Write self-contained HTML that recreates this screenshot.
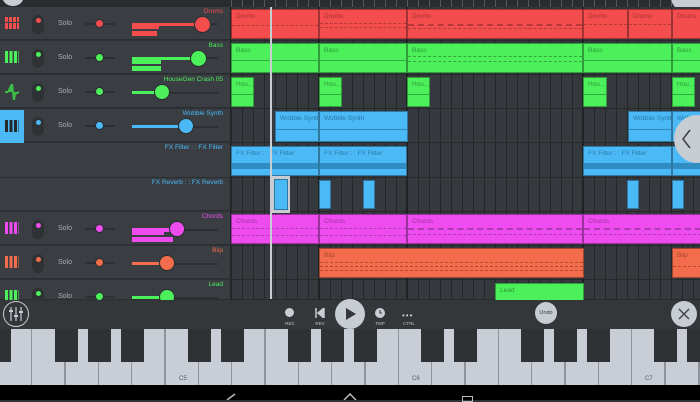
<!DOCTYPE html>
<html><head><meta charset="utf-8"><style>
*{margin:0;padding:0;box-sizing:border-box}
body{width:700px;height:400px;overflow:hidden;background:#2e3236;font-family:"Liberation Sans",sans-serif;position:relative}
.a{position:absolute}
.row{position:absolute;left:0;width:230px;height:33px;background:#3a3e43;border-bottom:1px solid #2a2d31}
.tl{position:absolute;left:231px;width:469px;height:34px;background:repeating-linear-gradient(90deg,#24272a 0 1px,#35393d 1px 11px);border-bottom:1px solid #26292c}
.pill{position:absolute;left:32px;width:12px;height:19px;border-radius:6px;background:#2e3235}
.dot{position:absolute;left:3.5px;top:3px;width:5px;height:5px;border-radius:50%}
.solo{position:absolute;left:58px;font-size:7px;color:#a9adb3}
.st{position:absolute;left:85px;width:30px;height:2px;background:#2c2f33}
.sk{position:absolute;width:9px;height:9px;border-radius:50%;border:1px solid #2a2d30}
.vt{position:absolute;left:132px;width:86px;height:2px;background:#2c2f33}
.vk{position:absolute;width:16px;height:16px;border-radius:50%;border:1px solid #2a2d30}
.nm{position:absolute;left:103px;width:120px;font-size:6.5px;text-align:right;white-space:nowrap}
.c{position:absolute;font-size:6.5px;padding:3px 0 0 4px;border:1px solid rgba(0,0,0,.35);overflow:hidden;white-space:nowrap}
.r{background:#f44d4e;color:#a53033}.g{background:#4cf05b;color:#2d9a38}.b{background:#4bb9f6;color:#2a7aa8}.m{background:#ef4cf0;color:#a02ea3}.o{background:#f36c4b;color:#a74630}
.c i{position:absolute;left:0;right:0;height:1px}
.wk{position:absolute;top:329px;width:33px;height:56px;background:#c8cdd6;border-right:1px solid #8e939b}
.bk{position:absolute;top:329px;width:23px;height:33px;background:#2e3235}
.kl{position:absolute;top:376px;font-size:6px;color:#555a60}
.lab{position:absolute;font-size:4.5px;color:#c0c4ca;text-align:center;width:20px}
</style></head><body>
<div class="a" style="left:0;top:0;width:700px;height:7px;background:#2a2d30"></div>
<div class="a" style="left:231px;top:0;width:469px;height:7px;background:repeating-linear-gradient(90deg,#55595e 0 1px,#2a2d30 1px 11px)"></div>
<div class="a" style="left:2px;top:-14px;width:22px;height:20px;border-radius:50%;background:#c8ccd3"></div>
<div class="a" style="left:671px;top:-20px;width:40px;height:34px;border-radius:50%;background:#c8ccd3"></div>

<div class="row" style="top:7px"></div><div class="row" style="top:41px"></div><div class="row" style="top:75px"></div><div class="row" style="top:109px"></div><div class="row" style="top:143px;height:35px"></div><div class="row" style="top:178px"></div><div class="row" style="top:212px"></div><div class="row" style="top:246px"></div><div class="row" style="top:280px;height:20px"></div>
<div class="a" style="left:230px;top:7px;width:1px;height:293px;background:#222528"></div>
<div class="a" style="left:0;top:110px;width:24px;height:33px;background:#4bb9f6"></div>

<div class="a" style="left:5px;top:17px;width:14px;height:12px;background:repeating-linear-gradient(90deg,#f44d4e 0 3px,#3a3e43 3px 4px)"></div>
<div class="a" style="left:5px;top:22px;width:14px;height:1px;background:#3a3e43"></div>
<div class="a" style="left:5px;top:51px;width:14px;height:12px;background:repeating-linear-gradient(90deg,#4cf05b 0 3px,#3a3e43 3px 4.5px)"></div>
<svg class="a" style="left:5px;top:84px" width="14" height="16"><path d="M0 8h3M3 8l2-4 2-4 1 8 1 8 1-6 4-2" stroke="#3cbf48" stroke-width="2" fill="#3cbf48"/></svg>
<div class="a" style="left:5px;top:120px;width:14px;height:12px;background:repeating-linear-gradient(90deg,#23282c 0 3px,#4bb9f6 3px 4.5px)"></div>
<div class="a" style="left:5px;top:222px;width:14px;height:12px;background:repeating-linear-gradient(90deg,#ef4cf0 0 3px,#3a3e43 3px 4.5px)"></div>
<div class="a" style="left:5px;top:256px;width:14px;height:12px;background:repeating-linear-gradient(90deg,#f36c4b 0 3px,#3a3e43 3px 4.5px)"></div>
<div class="a" style="left:5px;top:290px;width:14px;height:10px;background:repeating-linear-gradient(90deg,#4cf05b 0 3px,#3a3e43 3px 4.5px)"></div>

<div class="pill" style="top:15px"><div class="dot" style="background:#f44d4e"></div></div>
<div class="pill" style="top:49px"><div class="dot" style="background:#4cf05b"></div></div>
<div class="pill" style="top:83px"><div class="dot" style="background:#4cf05b"></div></div>
<div class="pill" style="top:117px"><div class="dot" style="background:#4bb9f6"></div></div>
<div class="pill" style="top:220px"><div class="dot" style="background:#ef4cf0"></div></div>
<div class="pill" style="top:254px"><div class="dot" style="background:#f36c4b"></div></div>
<div class="pill" style="top:288px"><div class="dot" style="background:#4cf05b"></div></div>

<div class="solo" style="top:20px">Solo</div><div class="solo" style="top:54px">Solo</div><div class="solo" style="top:88px">Solo</div><div class="solo" style="top:122px">Solo</div><div class="solo" style="top:225px">Solo</div><div class="solo" style="top:259px">Solo</div><div class="solo" style="top:293px">Solo</div>

<div class="st" style="top:23px"></div><div class="sk" style="left:95px;top:19px;background:#f44d4e"></div>
<div class="st" style="top:57px"></div><div class="sk" style="left:95px;top:53px;background:#4cf05b"></div>
<div class="st" style="top:91px"></div><div class="sk" style="left:95px;top:87px;background:#4cf05b"></div>
<div class="st" style="top:125px"></div><div class="sk" style="left:95px;top:121px;background:#4bb9f6"></div>
<div class="st" style="top:228px"></div><div class="sk" style="left:95px;top:224px;background:#ef4cf0"></div>
<div class="st" style="top:262px"></div><div class="sk" style="left:95px;top:258px;background:#f36c4b"></div>
<div class="st" style="top:296px"></div><div class="sk" style="left:95px;top:292px;background:#4cf05b"></div>

<div class="vt" style="top:23px"></div><div class="a" style="left:132px;top:23px;width:70px;height:3px;background:#f44d4e"></div><div class="a" style="left:132px;top:26px;width:27px;height:3px;background:#f44d4e"></div><div class="a" style="left:132px;top:31px;width:25px;height:5px;background:#f44d4e"></div><div class="vk" style="left:194px;top:16px;width:17px;height:17px;background:#f44d4e"></div>
<div class="vt" style="top:57px"></div><div class="a" style="left:132px;top:57px;width:60px;height:3px;background:#4cf05b"></div><div class="a" style="left:132px;top:60px;width:29px;height:4px;background:#4cf05b"></div><div class="a" style="left:132px;top:66px;width:29px;height:5px;background:#4cf05b"></div><div class="vk" style="left:190px;top:50px;width:17px;height:17px;background:#4cf05b"></div>
<div class="vt" style="top:92px"></div><div class="a" style="left:132px;top:91px;width:24px;height:3px;background:#4cf05b"></div><div class="vk" style="left:154px;top:84px;background:#4cf05b"></div>
<div class="vt" style="top:126px"></div><div class="a" style="left:132px;top:125px;width:46px;height:3px;background:#4bb9f6"></div><div class="vk" style="left:178px;top:118px;background:#4bb9f6"></div>
<div class="vt" style="top:229px"></div><div class="a" style="left:132px;top:228px;width:40px;height:4px;background:#ef4cf0"></div><div class="a" style="left:132px;top:232px;width:32px;height:3px;background:#ef4cf0"></div><div class="a" style="left:132px;top:237px;width:41px;height:5px;background:#ef4cf0"></div><div class="vk" style="left:169px;top:221px;background:#ef4cf0"></div>
<div class="vt" style="top:263px"></div><div class="a" style="left:132px;top:262px;width:30px;height:3px;background:#f36c4b"></div><div class="vk" style="left:159px;top:255px;background:#f36c4b"></div>
<div class="vt" style="top:297px"></div><div class="a" style="left:132px;top:296px;width:30px;height:3px;background:#4cf05b"></div><div class="vk" style="left:159px;top:289px;background:#4cf05b"></div>

<div class="nm" style="top:8px;color:#f44d4e">Drums</div>
<div class="nm" style="top:42px;color:#4cf05b">Bass</div>
<div class="nm" style="top:76px;color:#4cf05b">HouseGen Crash 05</div>
<div class="nm" style="top:110px;color:#4bb9f6">Wobble Synth</div>
<div class="nm" style="top:144px;color:#4bb9f6">FX Filter : : FX Filter</div>
<div class="nm" style="top:179px;color:#4bb9f6">FX Reverb : : FX Reverb</div>
<div class="nm" style="top:213px;color:#ef4cf0">Chords</div>
<div class="nm" style="top:247px;color:#f36c4b">Blip</div>
<div class="nm" style="top:281px;color:#4cf05b">Lead</div>

<div class="tl" style="top:7px"></div><div class="tl" style="top:41px"></div><div class="tl" style="top:75px"></div><div class="tl" style="top:109px"></div><div class="tl" style="top:143px;height:35px"></div><div class="tl" style="top:178px"></div><div class="tl" style="top:212px"></div><div class="tl" style="top:246px"></div><div class="tl" style="top:280px;height:20px"></div>
<div class="a" style="left:318px;top:7px;width:2px;height:293px;background:#1f2224"></div>
<div class="a" style="left:406px;top:7px;width:2px;height:293px;background:#1f2224"></div>
<div class="a" style="left:582px;top:7px;width:2px;height:293px;background:#1f2224"></div>

<div class="c r" style="left:231px;top:9px;width:88px;height:30px">Drums<i style="top:15px;border-top:1px dashed #b8393a;height:0"></i></div>
<div class="c r" style="left:319px;top:9px;width:88px;height:30px">Drums<i style="top:13px;border-top:1px dashed #b8393a;height:0"></i><i style="top:17px;border-top:1px dashed #b8393a;height:0"></i></div>
<div class="c r" style="left:407px;top:9px;width:176px;height:30px">Drums<i style="top:14px;border-top:2px dashed #b8393a;height:0"></i><i style="top:18px;border-top:1px dashed #b8393a;height:0"></i></div>
<div class="c r" style="left:583px;top:9px;width:45px;height:30px">Drums<i style="top:14px;border-top:1px dashed #b8393a;height:0"></i></div>
<div class="c r" style="left:628px;top:9px;width:44px;height:30px">Drums<i style="top:14px;border-top:1px dashed #b8393a;height:0"></i></div>
<div class="c r" style="left:672px;top:9px;width:30px;height:30px">Drums</div>
<div class="c g" style="left:231px;top:43px;width:88px;height:30px">Bass<i style="top:16px;background:#33a83d"></i></div>
<div class="c g" style="left:319px;top:43px;width:88px;height:30px">Bass<i style="top:16px;background:#33a83d"></i></div>
<div class="c g" style="left:407px;top:43px;width:176px;height:30px">Bass<i style="top:12px;border-top:1px dashed #33a83d;height:0"></i><i style="top:17px;border-top:1px dashed #33a83d;height:0"></i></div>
<div class="c g" style="left:583px;top:43px;width:89px;height:30px">Bass<i style="top:16px;background:#33a83d"></i></div>
<div class="c g" style="left:672px;top:43px;width:30px;height:30px">Bass<i style="top:16px;background:#33a83d"></i></div>
<div class="c g" style="left:231px;top:77px;width:23px;height:30px">Hou...<i style="top:16px;background:#33a83d"></i></div>
<div class="c g" style="left:319px;top:77px;width:23px;height:30px">Hou...<i style="top:16px;background:#33a83d"></i></div>
<div class="c g" style="left:407px;top:77px;width:23px;height:30px">Hou...<i style="top:16px;background:#33a83d"></i></div>
<div class="c g" style="left:583px;top:77px;width:24px;height:30px">Hou...<i style="top:16px;background:#33a83d"></i></div>
<div class="c g" style="left:672px;top:77px;width:23px;height:30px">Hou...<i style="top:16px;background:#33a83d"></i></div>
<div class="c b" style="left:275px;top:111px;width:44px;height:31px">Wobble Synth<i style="top:17px;background:#2d87ba"></i></div>
<div class="c b" style="left:319px;top:111px;width:89px;height:31px">Wobble Synth<i style="top:17px;background:#2d87ba"></i></div>
<div class="c b" style="left:628px;top:111px;width:44px;height:31px">Wobble Synth<i style="top:17px;background:#2d87ba"></i></div>
<div class="c b" style="left:672px;top:111px;width:30px;height:31px">Wob</div>
<div class="c b" style="left:231px;top:146px;width:88px;height:30px">FX Filter : : FX Filter<i style="top:16px;height:6px;background:#2f8dc2"></i></div>
<div class="c b" style="left:319px;top:146px;width:88px;height:30px">FX Filter : : FX Filter<i style="top:16px;height:6px;background:#2f8dc2"></i></div>
<div class="c b" style="left:583px;top:146px;width:89px;height:30px">FX Filter : : FX Filter<i style="top:16px;height:6px;background:#2f8dc2"></i></div>
<div class="c b" style="left:672px;top:146px;width:30px;height:30px"><i style="top:16px;height:6px;background:#2f8dc2"></i></div>
<div class="a" style="left:272px;top:176px;width:18px;height:37px;background:#c8ccd3"></div>
<div class="c b" style="left:274px;top:179px;width:14px;height:31px"></div>
<div class="c b" style="left:319px;top:180px;width:12px;height:29px"></div>
<div class="c b" style="left:363px;top:180px;width:12px;height:29px"></div>
<div class="c b" style="left:627px;top:180px;width:12px;height:29px"></div>
<div class="c b" style="left:672px;top:180px;width:12px;height:29px"></div>
<div class="c m" style="left:231px;top:214px;width:88px;height:30px">Chords<i style="top:13px;height:2px;border-top:1px dashed #b03ab3"></i><i style="top:20px;border-top:1px dashed #b03ab3;height:0"></i></div>
<div class="c m" style="left:319px;top:214px;width:88px;height:30px">Chords<i style="top:13px;height:2px;border-top:1px dashed #b03ab3"></i><i style="top:20px;border-top:1px dashed #b03ab3;height:0"></i></div>
<div class="c m" style="left:407px;top:214px;width:176px;height:30px">Chords<i style="top:13px;height:2px;border-top:2px dashed #b03ab3"></i><i style="top:19px;border-top:1px dashed #b03ab3;height:0"></i></div>
<div class="c m" style="left:583px;top:214px;width:119px;height:30px">Chords<i style="top:13px;border-top:2px dashed #b03ab3;height:0"></i><i style="top:19px;border-top:1px dashed #b03ab3;height:0"></i></div>
<div class="c o" style="left:319px;top:248px;width:265px;height:30px">Blip<i style="top:13px;border-top:1px dashed #b44d33;height:0"></i><i style="top:17px;border-top:1px dashed #b44d33;height:0"></i><i style="top:21px;border-top:1px dashed #b44d33;height:0"></i></div>
<div class="c o" style="left:672px;top:248px;width:30px;height:30px">Blip<i style="top:17px;border-top:1px dashed #b44d33;height:0"></i></div>
<div class="c g" style="left:495px;top:283px;width:89px;height:20px">Lead</div>

<div class="a" style="left:270px;top:7px;width:2px;height:292px;background:#c8ccd3"></div>
<div class="a" style="left:674px;top:115px;width:46px;height:48px;border-radius:50%;background:#c8ccd3"></div>
<svg class="a" style="left:680px;top:128px" width="14" height="22"><path d="M10 2L3 11l7 9" stroke="#3a3e43" stroke-width="1.5" fill="none"/></svg>

<div class="a" style="left:0;top:300px;width:700px;height:29px;background:#33373a"></div>
<div class="a" style="left:3px;top:301px;width:26px;height:26px;border-radius:50%;border:1.5px solid #c8ccd3"></div>
<svg class="a" style="left:8px;top:306px" width="16" height="16" stroke="#c8ccd3" stroke-width="1.2"><path d="M3 1v14M8 1v14M13 1v14"/><path d="M1 5h4M6 10h4M11 6h4" stroke-width="2"/></svg>
<div class="a" style="left:285px;top:308px;width:9px;height:9px;border-radius:50%;background:#c8ccd3"></div><div class="lab" style="left:280px;top:321px">REC</div>
<svg class="a" style="left:315px;top:308px" width="10" height="10"><path d="M1 0v10M9 0L3 5l6 5z" stroke="#c8ccd3" fill="#c8ccd3" stroke-width="1.5"/></svg><div class="lab" style="left:310px;top:321px">REV</div>
<div class="a" style="left:335px;top:299px;width:30px;height:30px;border-radius:50%;background:#c8ccd3"></div>
<svg class="a" style="left:345px;top:307px" width="12" height="14"><path d="M1 1L11 7 1 13z" fill="#33373a"/></svg>
<div class="a" style="left:375px;top:308px;width:10px;height:10px;border-radius:50%;background:#c8ccd3"></div><svg class="a" style="left:375px;top:308px" width="10" height="10"><path d="M5 2v3h2" stroke="#33373a" fill="none"/></svg><div class="lab" style="left:370px;top:321px">TMP</div>
<div class="a" style="left:402px;top:311px;font-size:8px;color:#c8ccd3;letter-spacing:1px">•••</div><div class="lab" style="left:399px;top:321px">CTRL</div>
<div class="a" style="left:535px;top:302px;width:22px;height:22px;border-radius:50%;background:#c8ccd3;font-size:5.5px;color:#3a3e43;text-align:center;line-height:22px">Undo</div>
<div class="a" style="left:671px;top:301px;width:26px;height:26px;border-radius:50%;background:#c8ccd3"></div>
<svg class="a" style="left:677px;top:307px" width="14" height="14"><path d="M2 2l10 10M12 2L2 12" stroke="#3a3e43" stroke-width="1.3"/></svg>

<div class="a" style="left:0;top:329px;width:700px;height:56px;background:#8e939b"></div>
<div class="wk" style="left:-1px"></div><div class="wk" style="left:32px"></div><div class="wk" style="left:66px"></div><div class="wk" style="left:99px"></div><div class="wk" style="left:132px"></div><div class="wk" style="left:166px"></div><div class="wk" style="left:199px"></div><div class="wk" style="left:232px"></div><div class="wk" style="left:266px"></div><div class="wk" style="left:299px"></div><div class="wk" style="left:332px"></div><div class="wk" style="left:366px"></div><div class="wk" style="left:399px"></div><div class="wk" style="left:432px"></div><div class="wk" style="left:466px"></div><div class="wk" style="left:499px"></div><div class="wk" style="left:532px"></div><div class="wk" style="left:566px"></div><div class="wk" style="left:599px"></div><div class="wk" style="left:632px"></div><div class="wk" style="left:666px"></div>
<div class="bk" style="left:-12px"></div><div class="bk" style="left:55px"></div><div class="bk" style="left:88px"></div><div class="bk" style="left:121px"></div><div class="bk" style="left:188px"></div><div class="bk" style="left:221px"></div><div class="bk" style="left:288px"></div><div class="bk" style="left:321px"></div><div class="bk" style="left:354px"></div><div class="bk" style="left:421px"></div><div class="bk" style="left:454px"></div><div class="bk" style="left:521px"></div><div class="bk" style="left:554px"></div><div class="bk" style="left:587px"></div><div class="bk" style="left:654px"></div><div class="bk" style="left:687px"></div>
<div class="kl" style="left:179px">C5</div><div class="kl" style="left:412px">C6</div><div class="kl" style="left:645px">C7</div>

<div class="a" style="left:0;top:385px;width:700px;height:15px;background:#000"></div>
<svg class="a" style="left:225px;top:393px" width="20" height="7"><path d="M2 7L10 1" stroke="#bbb" stroke-width="1.5" fill="none"/></svg>
<svg class="a" style="left:343px;top:393px" width="14" height="7"><path d="M1 7L7 1l6 6" stroke="#bbb" stroke-width="1.5" fill="none"/></svg>
<div class="a" style="left:462px;top:396px;width:11px;height:6px;border:1.5px solid #bbb"></div>
</body></html>
